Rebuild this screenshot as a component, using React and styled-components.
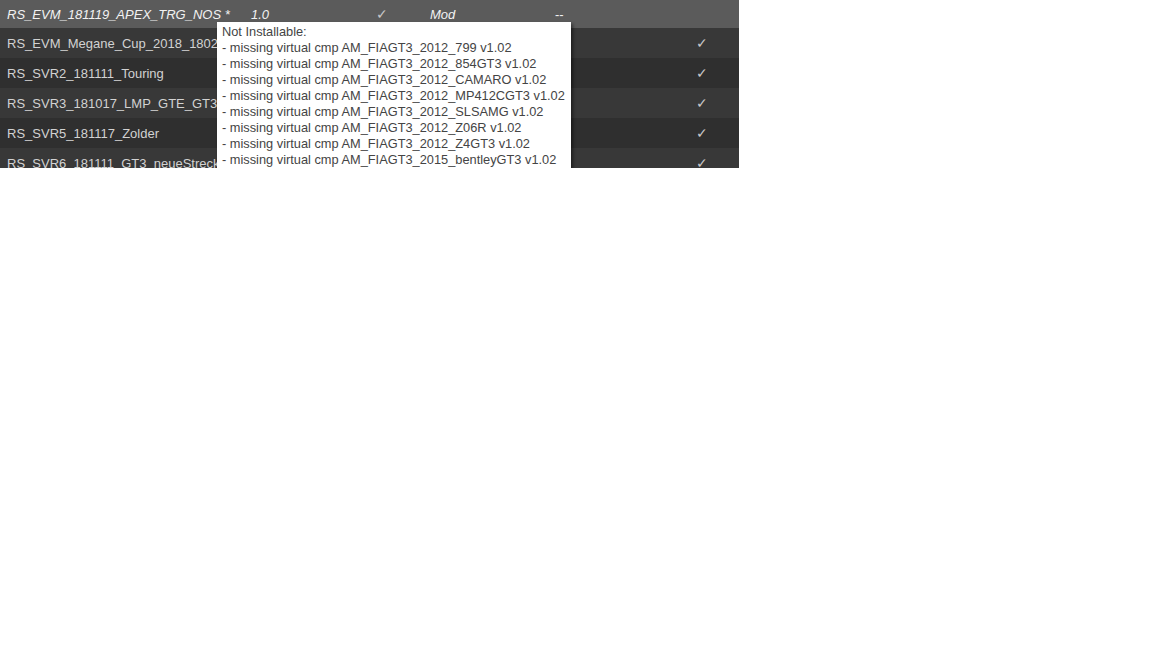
import styled, { createGlobalStyle } from "styled-components";

const GlobalStyle = createGlobalStyle`
  html, body {
    margin: 0;
    padding: 0;
    background: #ffffff;
  }
`;

const rows = [
  { name: "RS_EVM_Megane_Cup_2018_180227", check: true },
  { name: "RS_SVR2_181111_Touring", check: true },
  { name: "RS_SVR3_181017_LMP_GTE_GT3", check: true },
  { name: "RS_SVR5_181117_Zolder", check: true },
  { name: "RS_SVR6_181111_GT3_neueStrecke", check: true },
];

const missing = [
  "AM_FIAGT3_2012_799",
  "AM_FIAGT3_2012_854GT3",
  "AM_FIAGT3_2012_CAMARO",
  "AM_FIAGT3_2012_MP412CGT3",
  "AM_FIAGT3_2012_SLSAMG",
  "AM_FIAGT3_2012_Z06R",
  "AM_FIAGT3_2012_Z4GT3",
  "AM_FIAGT3_2015_bentleyGT3",
];

const App = () => {
  return (
    <>
      <GlobalStyle />
      <Frame>
        <Table>
          <Row $selected>
            <Cell $italic>RS_EVM_181119_APEX_TRG_NOS *</Cell>
            <Cell $italic>1.0</Cell>
            <Check>✓</Check>
            <Cell $italic>Mod</Cell>
            <Cell>--</Cell>
            <Cell />
          </Row>
          {rows.map((row, i) => {
            return (
              <Row key={row.name} $odd={i % 2 === 1}>
                <Cell>{row.name}</Cell>
                <Cell />
                <Cell />
                <Cell />
                <Cell />
                <Check>{row.check ? "✓" : ""}</Check>
              </Row>
            );
          })}
        </Table>
        <Tooltip>
          <div>Not Installable:</div>
          {missing.map((m) => {
            return <div key={m}>- missing virtual cmp {m} v1.02</div>;
          })}
        </Tooltip>
      </Frame>
    </>
  );
};

const Frame = styled.div`
  position: relative;
  width: 739px;
  height: 168px;
  overflow: hidden;
  background-color: #333333;
`;

const Table = styled.div`
  display: flex;
  flex-direction: column;
  font-family: "Liberation Sans", Arial, sans-serif;
  font-size: 13px;
`;

const Row = styled.div`
  display: grid;
  grid-template-columns: 244px 126px 53px 125px 142px 1fr;
  align-items: center;
  height: ${(p) => (p.$selected ? "28px" : "30px")};
  color: ${(p) => (p.$selected ? "#f2f2f2" : "#d2d2d2")};
  background-color: ${(p) =>
    p.$selected ? "#5b5b5b" : p.$odd ? "#2f2f2f" : "#383838"};
  white-space: nowrap;
`;

const Cell = styled.span`
  padding-left: 7px;
  font-style: ${(p) => (p.$italic ? "italic" : "normal")};
  overflow: hidden;
`;

const Check = styled.span`
  padding-left: 6px;
  font-family: "DejaVu Sans", sans-serif;
  font-size: 14px;
  font-weight: 300;
  color: #c8c8c8;
`;

const Tooltip = styled.div`
  position: absolute;
  left: 217px;
  top: 22px;
  width: 344px;
  padding: 2px 5px 4px 5px;
  background-color: #ffffff;
  box-shadow: 2px 2px 3px rgba(0, 0, 0, 0.45);
  font-family: "Liberation Sans", Arial, sans-serif;
  font-size: 12.8px;
  line-height: 16px;
  color: #444444;
  white-space: nowrap;
`;

export default App;
